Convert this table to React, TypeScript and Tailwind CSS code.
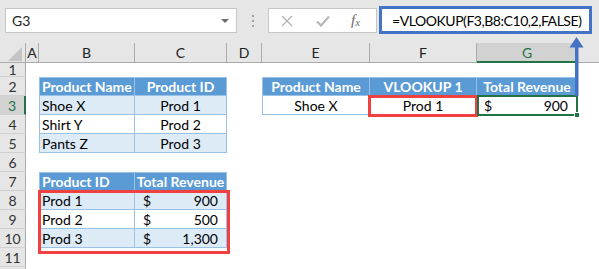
import React from "react";

type CellDef = { cls?: string; content?: React.ReactNode; overlay?: React.ReactNode } | null;

const WIDTHS = ["w-[13px]", "w-[96px]", "w-[92px]", "w-[35px]", "w-[108px]", "w-[107px]", "w-[101px]"];
const LETTERS = ["A", "B", "C", "D", "E", "F", "G"];

const bd = "border-r border-b border-[#9bc2e6]";
const hd = `bg-[#5b9bd5] text-white font-bold ${bd}`;
const bl = `bg-[#ddebf7] ${bd}`;
const wh = `bg-white ${bd}`;

function Money({ v, pl = "pl-[8px]", pr = "pr-[8px]" }: { v: string; pl?: string; pr?: string }) {
  return (
    <div className={`flex w-full justify-between ${pl} ${pr}`}>
      <span>$</span>
      <span>{v}</span>
    </div>
  );
}

const rows: { n: number; label: string; h: string; cells: CellDef[] }[] = [
  { n: 1, label: "1", h: "h-[14px]", cells: [] },
  {
    n: 2,
    label: "2",
    h: "h-[19px]",
    cells: [
      null,
      { cls: `${hd} border-l border-t pl-[2px]`, content: "Product Name" },
      { cls: `${hd} border-t justify-center`, content: "Product ID" },
      null,
      { cls: `${hd} border-l border-t justify-center`, content: "Product Name" },
      { cls: `${hd} border-t justify-center`, content: "VLOOKUP 1" },
      { cls: `${hd} border-t justify-center`, content: "Total Revenue" },
    ],
  },
  {
    n: 3,
    label: "3",
    h: "h-[19px]",
    cells: [
      null,
      { cls: `${bl} border-l pl-[2px]`, content: "Shoe X" },
      { cls: `${bl} justify-center`, content: "Prod 1" },
      null,
      { cls: `${wh} border-l justify-center`, content: "Shoe X" },
      {
        cls: `${wh} justify-center relative`,
        content: "Prod 1",
        overlay: <div className="absolute -left-[2px] -right-[2px] -top-[1px] -bottom-[3px] z-10 border-[3px] border-[#f04040]" />,
      },
      {
        cls: `${wh} relative`,
        content: <Money v="900" pl="pl-[7px]" pr="pr-[9px]" />,
        overlay: (
          <>
            <div className="absolute left-0 -right-[1px] -top-[1px] -bottom-[2px] z-10 border-2 border-[#217346]" />
            <div className="absolute -right-[3px] -bottom-[4px] z-20 h-[6px] w-[6px] border border-white bg-[#217346]" />
          </>
        ),
      },
    ],
  },
  {
    n: 4,
    label: "4",
    h: "h-[19px]",
    cells: [
      null,
      { cls: `${wh} border-l pl-[2px]`, content: "Shirt Y" },
      { cls: `${wh} justify-center`, content: "Prod 2" },
    ],
  },
  {
    n: 5,
    label: "5",
    h: "h-[19px]",
    cells: [
      null,
      { cls: `${bl} border-l pl-[2px]`, content: "Pants Z" },
      { cls: `${bl} justify-center`, content: "Prod 3" },
    ],
  },
  { n: 6, label: "6", h: "h-[19px]", cells: [] },
  {
    n: 7,
    label: "7",
    h: "h-[19px]",
    cells: [
      null,
      { cls: `${hd} border-l border-t pl-[2px]`, content: "Product ID" },
      { cls: `${hd} border-t justify-center`, content: "Total Revenue" },
    ],
  },
  {
    n: 8,
    label: "8",
    h: "h-[19px]",
    cells: [
      null,
      {
        cls: `${bl} border-l pl-[2px] relative`,
        content: "Prod 1",
        overlay: <div className="absolute -left-[2px] -top-[1px] z-10 h-[64px] w-[192px] border-[3px] border-[#f04040]" />,
      },
      { cls: bl, content: <Money v="900" /> },
    ],
  },
  {
    n: 9,
    label: "9",
    h: "h-[19px]",
    cells: [
      null,
      { cls: `${wh} border-l pl-[2px]`, content: "Prod 2" },
      { cls: wh, content: <Money v="500" /> },
    ],
  },
  {
    n: 10,
    label: "10",
    h: "h-[19px]",
    cells: [
      null,
      { cls: `${bl} border-l pl-[2px]`, content: "Prod 3" },
      { cls: bl, content: <Money v="1,300" /> },
    ],
  },
  { n: 11, label: "11", h: "h-[19px]", cells: [] },
  { n: 12, label: "", h: "h-[19px]", cells: [] },
];

function Toolbar() {
  return (
    <div className="flex h-[43px] items-start bg-[#e6e6e6] pl-[5px] pt-[8px]">
      <div className="flex h-[25px] w-[232px] shrink-0 items-center justify-between border border-[#c6c6c6] bg-white pl-[6px] pr-[7px] text-[14px] text-[#222]">
        <span>G3</span>
        <svg width="8" height="4" viewBox="0 0 8 4">
          <path d="M0 0H8L4 4Z" fill="#6d6d6d" />
        </svg>
      </div>
      <div className="flex h-[25px] w-[31px] shrink-0 flex-col items-center justify-center gap-[3px]">
        <span className="block h-[2px] w-[2px] bg-[#a3a3a3]" />
        <span className="block h-[2px] w-[2px] bg-[#a3a3a3]" />
        <span className="block h-[2px] w-[2px] bg-[#a3a3a3]" />
      </div>
      <div className="flex h-[25px] w-[109px] shrink-0 items-center border border-[#c6c6c6] bg-white pl-[12px]">
        <svg width="12" height="12" viewBox="0 0 12 12">
          <path d="M1 1L11 11M11 1L1 11" stroke="#b3b3b3" strokeWidth="1.3" fill="none" />
        </svg>
        <svg width="14" height="12" viewBox="0 0 14 12" className="ml-[23px]">
          <path d="M1 6.5L5 10.5L13 1.5" stroke="#b8b8b8" strokeWidth="2.2" fill="none" />
        </svg>
        <span className="ml-[21px] flex items-baseline font-['Liberation_Serif',serif] italic text-[#6b6b6b]">
          <span className="text-[15px]">f</span>
          <span className="relative top-[1px] text-[11px]">x</span>
        </span>
      </div>
      <div className="ml-[2px] -mt-[2px] flex h-[28px] w-[213px] shrink-0 items-center overflow-hidden whitespace-nowrap border-[3px] border-[#4472c4] bg-white pl-[10px] text-[14px] tracking-[-0.45px] text-black">
        =VLOOKUP(F3,B8:C10,2,FALSE)
      </div>
    </div>
  );
}

function HeaderRow() {
  return (
    <div className="flex h-[20px] bg-[#e6e6e6] text-[14px] text-[#222]">
      <div className="relative w-[26px] shrink-0 border-r border-b border-[#ababab]">
        <svg width="14" height="14" viewBox="0 0 14 14" className="absolute right-[3px] bottom-[1px]">
          <path d="M14 0V14H0Z" fill="#c4c4c4" />
        </svg>
      </div>
      {LETTERS.map((l, i) =>
        l === "G" ? (
          <div
            key={l}
            className={`${WIDTHS[i]} flex shrink-0 items-center justify-center border-r border-b-2 border-r-[#ababab] border-b-[#217346] bg-[#d2d2d2] text-[#217346]`}
          >
            {l}
          </div>
        ) : (
          <div key={l} className={`${WIDTHS[i]} flex shrink-0 items-center justify-center border-r border-b border-[#ababab]`}>
            {l}
          </div>
        )
      )}
      <div className="flex-1 border-b border-[#ababab]" />
    </div>
  );
}

function Sheet() {
  return (
    <div>
      <HeaderRow />
      {rows.map((r) => (
        <div key={r.n} className={`flex ${r.h}`}>
          {r.n === 3 ? (
            <div className="flex w-[26px] shrink-0 items-center justify-center border-r-2 border-b border-r-[#217346] border-b-[#d0d0d0] bg-[#d2d2d2] text-[14px] text-[#217346]">
              {r.label}
            </div>
          ) : (
            <div className="flex w-[26px] shrink-0 items-center justify-center border-r border-b border-r-[#ababab] border-b-[#d0d0d0] bg-[#e6e6e6] text-[14px] text-[#333]">
              {r.label}
            </div>
          )}
          {WIDTHS.map((w, i) => {
            const c = r.cells[i];
            if (!c) return <div key={i} className={`${w} shrink-0`} />;
            return (
              <div key={i} className={`${w} flex shrink-0 items-center whitespace-nowrap text-[14px] ${c.cls ?? ""}`}>
                {c.content}
                {c.overlay}
              </div>
            );
          })}
        </div>
      ))}
    </div>
  );
}

function Arrow() {
  return (
    <svg width="16" height="62" viewBox="0 0 16 62" className="absolute left-[569px] top-[36px] z-30">
      <path d="M7.5 1L14.5 11.5H0.5Z" fill="#4472c4" />
      <rect x="6" y="10" width="3.5" height="50" fill="#4472c4" />
    </svg>
  );
}

export default function App() {
  return (
    <div className="relative h-[269px] w-[599px] overflow-hidden bg-white font-['Lato',sans-serif] text-black">
      <Toolbar />
      <Sheet />
      <Arrow />
    </div>
  );
}
